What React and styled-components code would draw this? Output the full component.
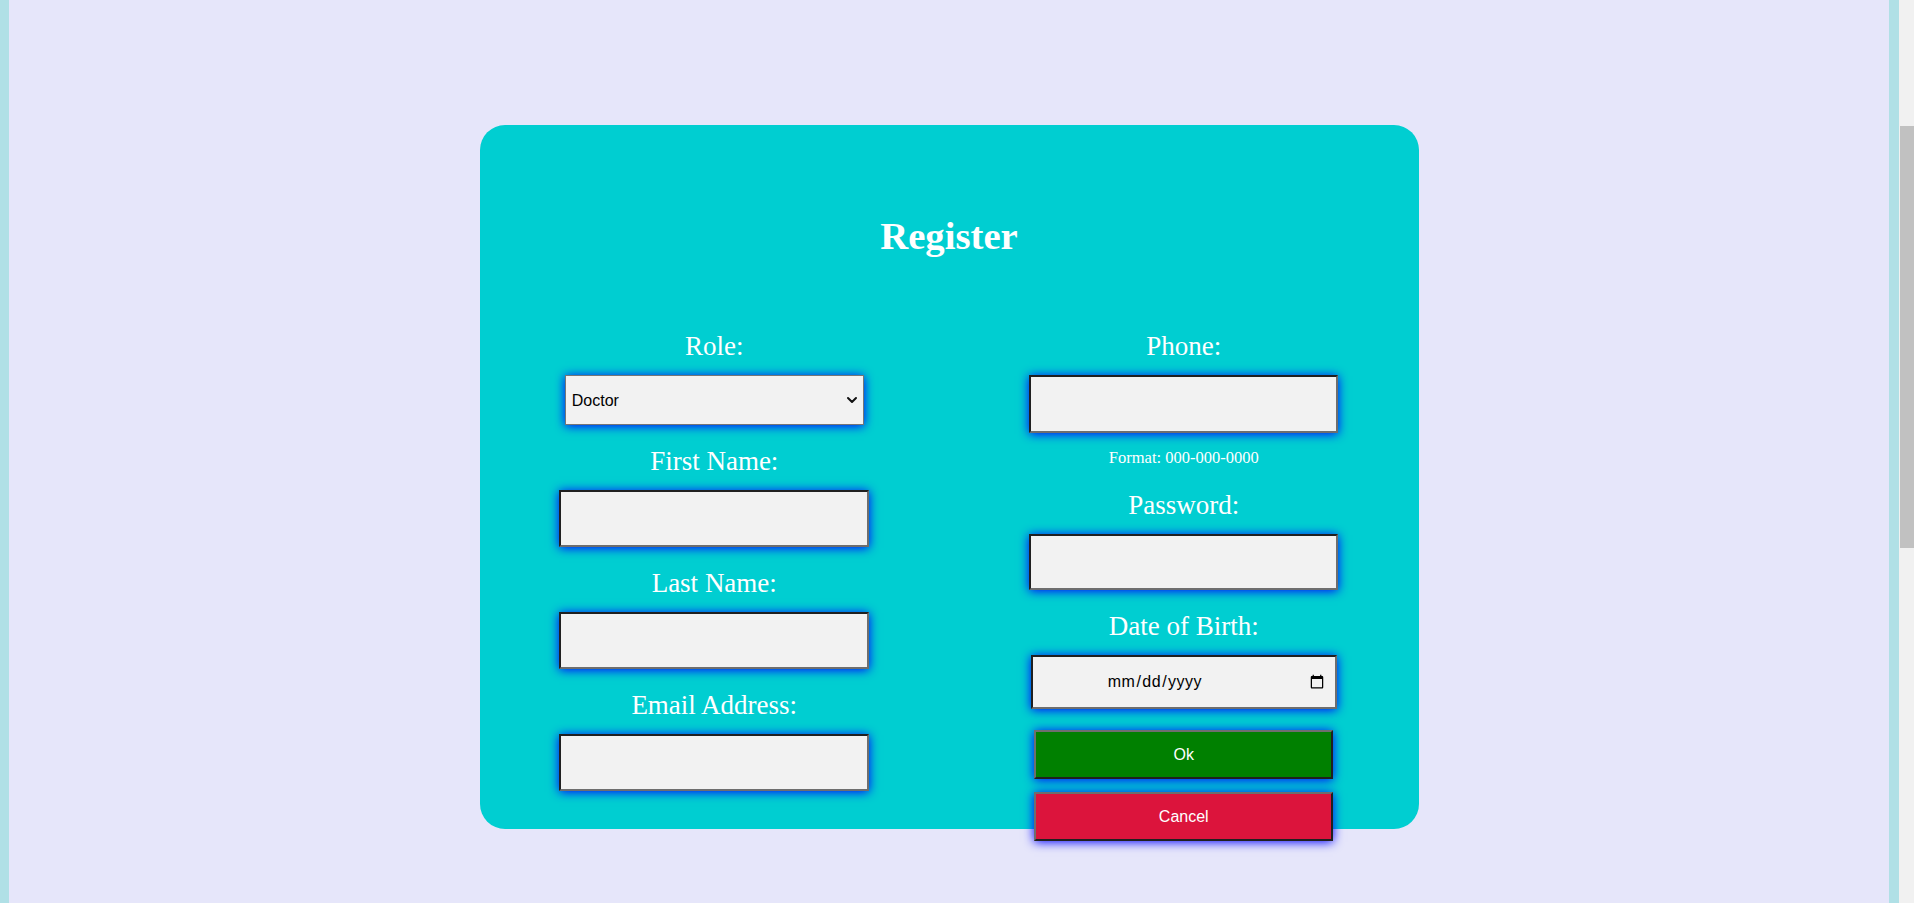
import React from 'react';
import styled, {createGlobalStyle} from "styled-components";
import {ChevronDown} from "lucide-react";

const GlobalStyle = createGlobalStyle`
  html, body {
    margin: 0;
  }

  body {
    /* right 15px stands in for the browser's scroll track */
    background: linear-gradient(to left, #f1f1f1 15px, #b0e0e6 15px);
    padding: 0 25px 0 9px;
    font-family: "Liberation Serif", "Times New Roman", serif;
  }

  body::after {
    content: "";
    position: fixed;
    top: 126px;
    right: 0;
    width: 14px;
    height: 422px;
    background: #c1c1c1;
  }

  * {
    box-sizing: border-box;
  }
`

const glow = '0 1px 10px #0000ff'

const App = () => {
    return (
        <>
            <GlobalStyle/>
            <Page>
                <Card>
                    <Title>Register</Title>
                    <Columns>
                        <Column>
                            <Label htmlFor="role">Role:</Label>
                            <SelectWrap>
                                <Select id="role" defaultValue="doctor">
                                    <option value="doctor">Doctor</option>
                                    <option value="nurse">Nurse</option>
                                    <option value="patient">Patient</option>
                                </Select>
                                <Arrow size={16} strokeWidth={3}/>
                            </SelectWrap>
                            <Label htmlFor="first">First Name:</Label>
                            <Field id="first" type="text" $w={310} $h={57}/>
                            <Label htmlFor="last">Last Name:</Label>
                            <Field id="last" type="text" $w={310} $h={57}/>
                            <Label htmlFor="email">Email Address:</Label>
                            <Field id="email" type="email" $w={310} $h={57}/>
                        </Column>
                        <Column>
                            <Label htmlFor="phone">Phone:</Label>
                            <Field id="phone" type="tel" $w={309} $h={58}/>
                            <Hint>Format: 000-000-0000</Hint>
                            <Label htmlFor="password">Password:</Label>
                            <Field id="password" type="password" $w={309} $h={56}/>
                            <Label htmlFor="dob">Date of Birth:</Label>
                            <DateField id="dob" type="date" $w={306} $h={54}/>
                            <Button type="submit" $color="#008000" $top={21}>Ok</Button>
                            <Button type="button" $color="#dc143c" $top={13}>Cancel</Button>
                        </Column>
                    </Columns>
                </Card>
            </Page>
        </>
    );
};

const Page = styled.div`
  background: #e6e6fa;
  min-height: 1860px;
  padding-top: 125px;
  display: flex;
  justify-content: center;
  align-items: flex-start;
`

const Card = styled.form`
  width: 939px;
  height: 704px;
  border-radius: 25px;
  background: #00ced1;
  padding-top: 89px;
`

const Title = styled.h1`
  margin: 0 0 73px;
  color: #fff;
  font-size: 38.7px;
  font-weight: bold;
  line-height: normal;
  text-align: center;
`

const Columns = styled.div`
  display: grid;
  grid-template-columns: 1fr 1fr;
`

const Column = styled.div`
  display: flex;
  flex-direction: column;
  align-items: center;

  > input, > div {
    margin-bottom: 21px;
  }
`

const Label = styled.label`
  display: block;
  color: #fff;
  font-size: 27px;
  line-height: normal;
  margin-bottom: 13px;
`

const Hint = styled.span`
  display: block;
  color: #fff;
  font-size: 16.5px;
  line-height: normal;
  margin: -6px 0 22px;
`

const Field = styled.input`
  width: ${p => p.$w}px;
  height: ${p => p.$h}px;
  background: #f2f2f2;
  border: 2px solid;
  border-color: #202020 #6e6e6e #6e6e6e #202020;
  box-shadow: ${glow};
  font-family: "Liberation Sans", Arial, sans-serif;
  font-size: 16px;
  padding: 0 6px;
  outline: none;
`

const DateField = styled(Field)`
  padding: 0 8px 0 74px;
  color: #000;
  letter-spacing: 0.5px;
  &&& {
    margin-bottom: 0;
  }
`

const SelectWrap = styled.div`
  position: relative;
  width: 299px;
  height: 50px;
`

const Select = styled.select`
  appearance: none;
  width: 100%;
  height: 100%;
  background: #f2f2f2;
  border: 1px solid #767676;
  border-radius: 0;
  box-shadow: ${glow};
  font-family: "Liberation Sans", Arial, sans-serif;
  font-size: 16px;
  color: #000;
  padding: 0 6px;
`

const Arrow = styled(ChevronDown)`
  position: absolute;
  right: 4px;
  top: 17px;
  color: #111;
  pointer-events: none;
`

const Button = styled.button`
  width: 299px;
  height: 49px;
  margin-top: ${p => p.$top}px;
  background: ${p => p.$color};
  color: #fff;
  border: 2px solid;
  border-color: #6e6e6e #202020 #202020 #6e6e6e;
  box-shadow: ${glow};
  font-family: "Liberation Sans", Arial, sans-serif;
  font-size: 16px;
  cursor: pointer;
`

export default App;
